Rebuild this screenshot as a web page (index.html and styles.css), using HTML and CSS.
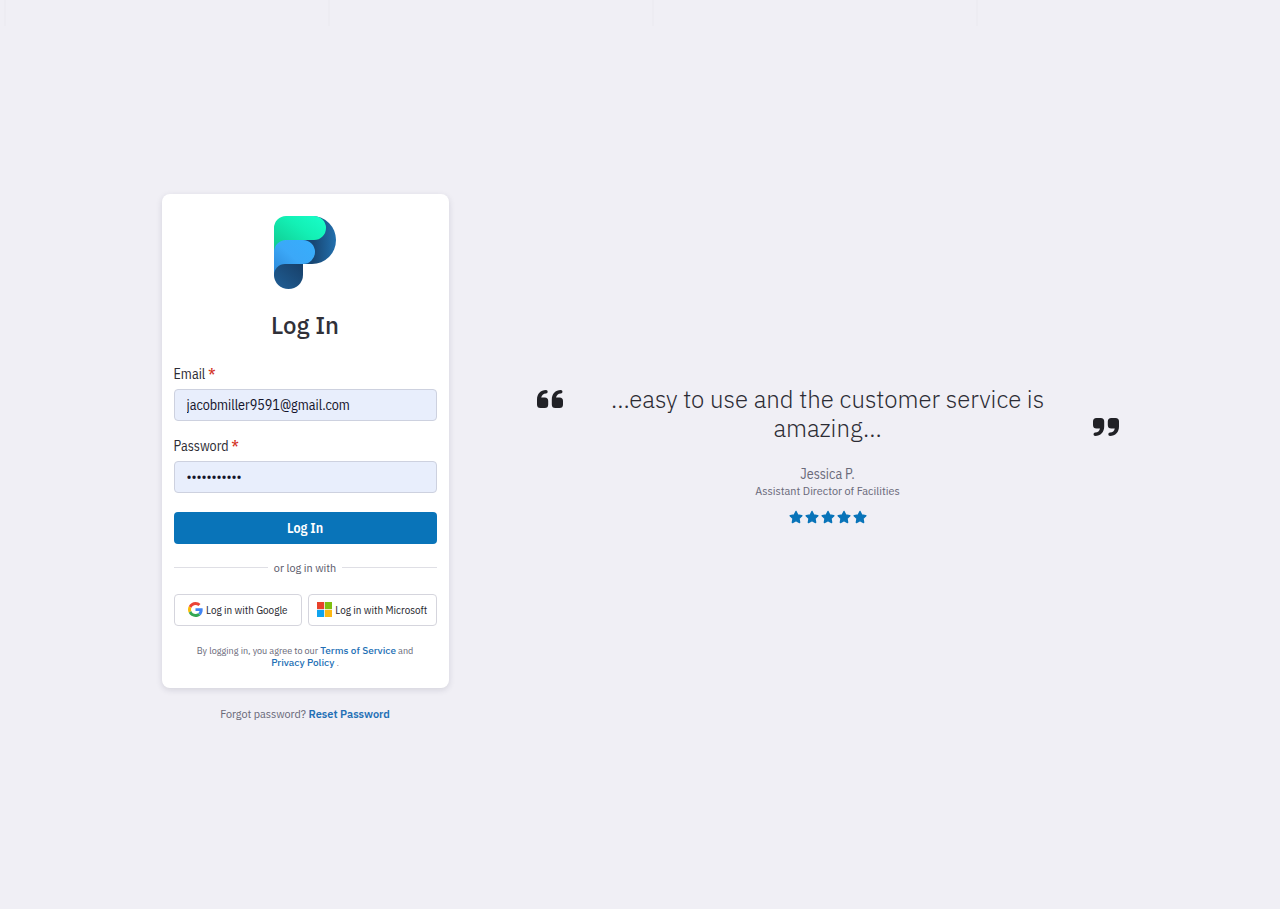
FILE: index.html
```html
<!DOCTYPE html>
<html lang="en">
<head>
<meta charset="utf-8">
<meta name="viewport" content="width=device-width, initial-scale=1">
<title>Log In</title>
<link rel="stylesheet" href="styles.css">
</head>
<body>
<svg class="symbols" aria-hidden="true">
  <symbol id="star" viewBox="0 0 24 24"><path d="M12 2.500l3 6.200 7 1-5 4.800 1.200 6.900L12 18.100l-6.200 3.300L7 14.500 2 9.700l7-1z" stroke="currentColor" stroke-width="2.500" stroke-linejoin="round" fill="currentColor"/></symbol>
  <symbol id="quote" viewBox="0 0 26 18"><path id="mark" d="M9 0C3.500 0 0 4 0 9.500V14.500A3.500 3.500 0 0 0 3.500 18H7.700A3.500 3.500 0 0 0 11.200 14.500V11A3.500 3.500 0 0 0 7.700 7.500H4.200C4.800 5 6.200 3.600 9 3.400A1.700 1.700 0 0 0 9 0Z"/><use href="#mark" x="14.800"/></symbol>
</svg>
<div class="guides" aria-hidden="true"><span></span><span></span><span></span><span></span></div>
<main class="page">
  <section class="login">
    <form class="card">
      <svg class="logo" viewBox="0 0 62 73" role="img" aria-label="Logo">
        <defs>
          <linearGradient id="green" x1="0" y1="1" x2="1" y2="0"><stop offset="0" stop-color="#10c58b"/><stop offset=".6" stop-color="#13f0b5"/><stop offset="1" stop-color="#18ffca"/></linearGradient>
          <linearGradient id="blue" x1="0" y1="1" x2="1" y2="0"><stop offset="0" stop-color="#2b86d6"/><stop offset=".5" stop-color="#3ba8f8"/><stop offset="1" stop-color="#37aefc"/></linearGradient>
          <linearGradient id="bowl" x1="0" y1="0" x2="1" y2="0"><stop offset=".55" stop-color="#184774"/><stop offset="1" stop-color="#2270ae"/></linearGradient>
          <linearGradient id="stem" x1="0" y1="1" x2="1" y2="0"><stop offset="0" stop-color="#205f96"/><stop offset="1" stop-color="#173f68"/></linearGradient>
        </defs>
        <path fill="url(#bowl)" d="M12 0H38A24 24 0 0 1 38 48H12Z"/>
        <path fill="url(#green)" d="M0 38V12A12 12 0 0 1 12 0H40A12 12 0 0 1 40 24H12Z"/>
        <path fill="url(#blue)" d="M0 61V36A12 12 0 0 1 12 24H29A12 12 0 0 1 29 48H12Z"/>
        <path fill="url(#stem)" d="M0 59A11 11 0 0 1 11 48H29V59A14.500 14 0 0 1 0 59Z"/>
      </svg>
      <h1 class="title">Log In</h1>
      <div class="field">
        <label for="email">Email <span class="required">*</span></label>
        <input id="email" type="email" value="jacobmiller9591@gmail.com" required>
      </div>
      <div class="field">
        <label for="password">Password <span class="required">*</span></label>
        <input id="password" type="password" value="facilities1" required>
      </div>
      <button class="submit" type="submit">Log In</button>
      <div class="divider">or log in with</div>
      <div class="providers">
        <button class="provider" type="button">
          <svg viewBox="0 0 48 48" aria-hidden="true"><path fill="#ea4335" d="M24 9.500c3.540 0 6.710 1.220 9.210 3.600l6.850-6.850C35.900 2.380 30.470 0 24 0 14.620 0 6.510 5.380 2.560 13.220l7.980 6.190C12.430 13.720 17.740 9.500 24 9.500z"/><path fill="#4285f4" d="M46.980 24.550c0-1.570-.15-3.090-.38-4.550H24v9.020h12.940c-.58 2.960-2.260 5.480-4.780 7.180l7.730 6c4.510-4.180 7.090-10.360 7.090-17.650z"/><path fill="#fbbc05" d="M10.530 28.590c-.48-1.450-.76-2.990-.76-4.590s.27-3.140.76-4.590l-7.980-6.190C.92 16.460 0 20.120 0 24s.92 7.540 2.560 10.780z"/><path fill="#34a853" d="M24 48c6.480 0 11.930-2.130 15.890-5.810l-7.730-6c-2.150 1.450-4.920 2.300-8.160 2.300-6.260 0-11.570-4.220-13.470-9.910l-7.980 6.190C6.510 42.620 14.620 48 24 48z"/></svg>
          Log in with Google
        </button>
        <button class="provider" type="button">
          <svg viewBox="0 0 21 21" aria-hidden="true"><path fill="#e8412a" d="M0 0h10v10H0z"/><path fill="#7fbf10" d="M11 0h10v10H11z"/><path fill="#10a3ee" d="M0 11h10v10H0z"/><path fill="#fdb813" d="M11 11h10v10H11z"/></svg>
          Log in with Microsoft
        </button>
      </div>
      <p class="terms">By logging in, you agree to our <a href="#">Terms of Service</a> and <a href="#">Privacy Policy</a> .</p>
    </form>
    <p class="forgot">Forgot password? <a href="#">Reset Password</a></p>
  </section>
  <figure class="testimonial">
    <svg class="quote" aria-hidden="true"><use href="#quote"/></svg>
    <div class="review">
      <blockquote>...easy to use and the customer service is amazing...</blockquote>
      <figcaption><span class="name">Jessica P.</span><span class="role">Assistant Director of Facilities</span></figcaption>
      <div class="stars" role="img" aria-label="5 out of 5 stars">
        <svg><use href="#star"/></svg><svg><use href="#star"/></svg><svg><use href="#star"/></svg><svg><use href="#star"/></svg><svg><use href="#star"/></svg>
      </div>
    </div>
    <svg class="quote closing" aria-hidden="true"><use href="#quote"/></svg>
  </figure>
</main>
</body>
</html>
```
FILE: styles.css
```css
* { box-sizing: border-box; }
body {
  margin: 0;
  min-height: 100vh;
  display: flex;
  background: #f0eff5;
  color: #2c2c34;
  font-family: "IBM Plex Sans Condensed", "IBM Plex Sans", Roboto, "Noto Sans", sans-serif;
  font-size: 14px;
  line-height: 16px;
}
p, h1, figure, blockquote { margin: 0; }
a { color: #236fb5; font-weight: 600; text-decoration: none; }
a, .title, .review blockquote { font-family: "IBM Plex Sans", Roboto, "Noto Sans", sans-serif; }
.symbols { position: absolute; width: 0; height: 0; }
.guides {
  position: absolute;
  top: 0;
  left: 4px;
  right: 0;
  display: grid;
  grid-template-columns: repeat(4, 324px);
  overflow: hidden;
}
.guides span { height: 26px; border-left: 2px solid #edecf2; }
.page {
  width: 100%;
  max-width: 957px;
  margin: auto;
  display: flex;
  align-items: center;
  gap: 88px;
}
.login { flex: none; width: 30%; min-width: 287px; padding-top: 6px; }
.card {
  padding: 22px 12px 19px;
  background: #fff;
  border-radius: 8px;
  box-shadow: 0 2px 6px rgba(40, 40, 70, .14);
}
.logo { display: block; width: 62px; height: 73px; margin: 0 auto 20px; }
.title {
  margin-bottom: 25px;
  font-size: 24px;
  line-height: 32px;
  font-weight: 500;
  text-align: center;
  color: #303038;
}
.field { margin-bottom: 17px; }
.field label { display: block; margin-bottom: 7px; }
.required { color: #d32f22; font-weight: 600; }
.field input {
  display: block;
  width: 100%;
  height: 32px;
  padding: 0 12px;
  border: 1px solid #cdd1df;
  border-radius: 4px;
  background: #e8eefc;
  color: #14142b;
  font: inherit;
}
.submit {
  display: block;
  width: 100%;
  height: 32px;
  margin-top: 19px;
  border: 0;
  border-radius: 4px;
  background: #0974b9;
  color: #fff;
  font: inherit;
  font-weight: 600;
}
.divider {
  display: flex;
  align-items: center;
  gap: 6px;
  margin: 16px 0 18px;
  font-size: 12px;
  color: #5c5c6c;
}
.divider::before, .divider::after { content: ""; flex: 1; height: 1px; background: #dfdfe5; }
.providers { display: grid; grid-template-columns: 1fr 1fr; gap: 6px; }
.provider {
  display: flex;
  align-items: center;
  justify-content: center;
  gap: 3px;
  height: 32px;
  padding: 0;
  border: 1px solid #d5d5dd;
  border-radius: 4px;
  background: #fff;
  color: #26262e;
  font: inherit;
  font-size: 11px;
  white-space: nowrap;
}
.provider svg { width: 15px; height: 15px; }
.terms { margin-top: 19px; padding: 0 16px; font-size: 10px; line-height: 12px; text-align: center; color: #6a6a7a; }
.terms a { font-weight: 500; }
.forgot { margin-top: 18px; font-size: 12px; text-align: center; color: #6a6a7a; }
.forgot a { font-size: 11px; }
.testimonial { flex: 1; display: flex; justify-content: space-between; }
.quote { flex: none; width: 26px; height: 18px; margin-top: 5px; fill: #212126; }
.closing { transform: rotate(180deg); margin-top: 33px; }
.review { flex: 1; padding: 0 40px; text-align: center; }
.review blockquote { font-size: 24px; line-height: 29px; font-weight: 300; }
.name, .role { display: block; color: #6a6a7a; }
.name { margin-top: 22px; line-height: 18px; }
.role { font-size: 12px; }
.stars { display: flex; justify-content: center; gap: 2px; margin-top: 11px; color: #0974b9; }
.stars svg { width: 14px; height: 14px; }
```
